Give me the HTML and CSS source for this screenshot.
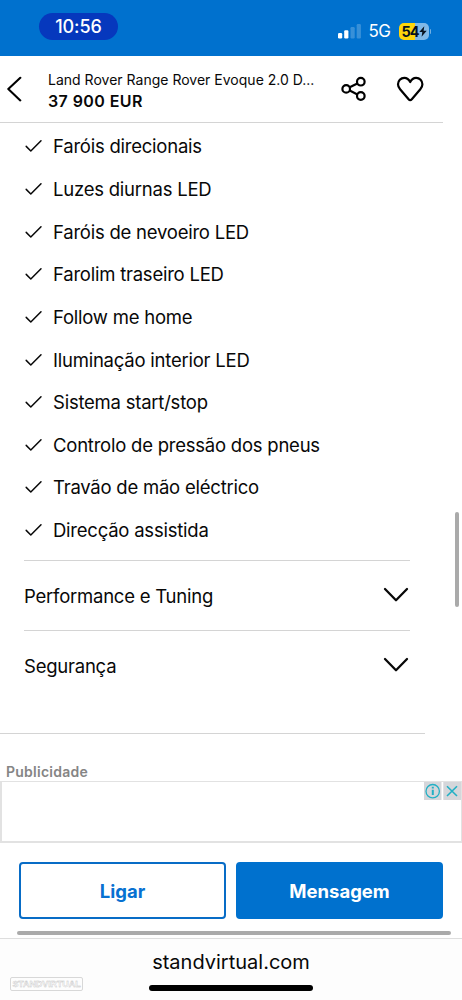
FILE: index.html
```html
<!DOCTYPE html>
<html lang="pt">
<head>
<meta charset="utf-8">
<meta name="viewport" content="width=device-width, initial-scale=1">
<title>Land Rover Range Rover Evoque - Standvirtual</title>
<link rel="stylesheet" href="styles.css">
</head>
<body>
<svg class="defs" width="0" height="0" aria-hidden="true">
  <symbol id="check" viewBox="0 0 18 14"><path d="M1.2 7.4 5.8 12 16 1.7" fill="none" stroke="currentColor" stroke-width="1.5" stroke-linecap="round" stroke-linejoin="round"/></symbol>
  <symbol id="chevron" viewBox="0 0 26 16"><path d="M2 2 13 13.2 24 2" fill="none" stroke="currentColor" stroke-width="2.3" stroke-linecap="round" stroke-linejoin="round"/></symbol>
</svg>
<div class="screen">
  <div class="status">
    <span class="time"><span>10:56</span></span>
    <div class="indicators">
      <svg class="signal" width="24" height="16" viewBox="0 0 24 16"><g fill="#fff"><rect x="0" y="10" width="4.2" height="5.4" rx="1.2"/><rect x="6.2" y="7.3" width="4.2" height="8.1" rx="1.2"/><g opacity=".22"><rect x="12.5" y="4" width="4.2" height="11.4" rx="1.2"/><rect x="18.7" y="1" width="4.2" height="14.4" rx="1.2"/></g></g></svg>
      <span class="network">5G</span>
      <div class="battery"><span class="level">54</span><svg width="8" height="11" viewBox="0 0 8 11"><path d="M5.3.2.3 6h3L2.6 10.8 7.7 4.8H4.6Z" fill="#08131f"/></svg></div>
      <i class="battery-tip"></i>
    </div>
  </div>

  <header class="header">
    <svg class="back" width="15" height="26" viewBox="0 0 15 26"><path d="M13.3 1.8 1.3 13.1 13.3 24.4" fill="none" stroke="#000" stroke-width="2.1" stroke-linecap="round" stroke-linejoin="round"/></svg>
    <div class="ad-title"><span class="model">Land Rover Range Rover Evoque 2.0 D...</span><strong class="price">37 900 EUR</strong></div>
    <svg class="share" width="26" height="26" viewBox="0 0 26 26" fill="none" stroke="#000" stroke-width="2.2"><circle cx="5.2" cy="12.9" r="3.8"/><circle cx="19.8" cy="5.7" r="3.8"/><circle cx="19.8" cy="20" r="3.8"/><path d="m8.7 11.2 7.7-3.8M8.7 14.6l7.7 3.8"/></svg>
    <svg class="heart" width="28" height="26" viewBox="0 0 28 26"><path d="M14.2 6.1C12.9 3.3 10.9 1.8 8.3 1.8 4.7 1.8 2 4.6 2 8.3c0 2 .7 3.5 2.1 5l8.5 9.9c1 1.1 2.2 1.1 3.2 0l8.5-9.9c1.4-1.5 2.1-3 2.1-5 0-3.7-2.7-6.5-6.3-6.5-2.6 0-4.6 1.5-5.9 4.3Z" fill="none" stroke="#000" stroke-width="2.2" stroke-linejoin="round"/></svg>
  </header>

  <main>
    <ul class="features">
      <li><svg><use href="#check"/></svg><span>Faróis direcionais</span></li>
      <li><svg><use href="#check"/></svg><span>Luzes diurnas LED</span></li>
      <li><svg><use href="#check"/></svg><span>Faróis de nevoeiro LED</span></li>
      <li><svg><use href="#check"/></svg><span>Farolim traseiro LED</span></li>
      <li><svg><use href="#check"/></svg><span>Follow me home</span></li>
      <li><svg><use href="#check"/></svg><span>Iluminação interior LED</span></li>
      <li><svg><use href="#check"/></svg><span>Sistema start/stop</span></li>
      <li><svg><use href="#check"/></svg><span>Controlo de pressão dos pneus</span></li>
      <li><svg><use href="#check"/></svg><span>Travão de mão eléctrico</span></li>
      <li><svg><use href="#check"/></svg><span>Direcção assistida</span></li>
    </ul>
    <section class="sections">
      <div class="section-row"><span>Performance e Tuning</span><svg><use href="#chevron"/></svg></div>
      <div class="section-row"><span>Segurança</span><svg><use href="#chevron"/></svg></div>
    </section>
    <div class="divider"></div>
    <div class="ad-label">Publicidade</div>
    <div class="ad-slot">
      <svg width="37" height="18" viewBox="0 0 37 18"><path d="M0 0h17.5v18H0zM19.3 0H37v18H19.3z" fill="#d5d6da"/><g fill="none" stroke="#22b0c5" stroke-width="1.6"><circle cx="8.7" cy="9.2" r="6.7" stroke-width="1.3"/><path d="M8.8 7.8v5.3M8.8 4.8v1.6" stroke-width="2"/><path d="m23 4.2 10 9.8M33 4.2 23 14"/></g></svg>
    </div>
  </main>

  <div class="actions"><button class="call">Ligar</button><button class="message">Mensagem</button></div>
  <div class="scroll-x"></div>
  <footer class="browser-bar">
    <span class="watermark">STANDVIRTUAL</span>
    <div class="address"><span>standvirtual.com</span><i class="home-indicator"></i></div>
  </footer>
  <div class="scroll-y"></div>
</div>
</body>
</html>
```
FILE: styles.css
```css
* { box-sizing: border-box; }
body { margin: 0; background: #fff; color: #080808; font-family: Inter, "Liberation Sans", sans-serif; }
.defs { position: absolute; }
svg { display: block; flex: none; }
.screen { position: relative; display: flex; flex-direction: column; width: 462px; height: 1000px; overflow: hidden; }
.status { display: flex; justify-content: space-between; align-items: flex-start; height: 55.5px; padding: 13px 31px 0 39px; background: #0071ce; color: #fff; }
.time { display: flex; align-items: center; justify-content: center; width: 79px; height: 27px; border-radius: 14px; background: #0638bd; font-size: 18px; font-weight: 500; letter-spacing: -.1px; }
.indicators { display: flex; align-items: center; height: 36px; }
.network { width: 23px; margin-left: 7px; font-size: 17px; letter-spacing: -.6px; }
.battery { display: flex; align-items: center; width: 30px; height: 17px; margin-left: 7px; padding-left: 3px; border-radius: 5px; background: linear-gradient(90deg, #ffd60a 54%, #81b9e7 54%); color: #08131f; }
.level { width: 17px; font-size: 14.5px; font-weight: 700; letter-spacing: -.9px; }
.battery-tip { width: 1.5px; height: 5px; margin-left: 1px; border-radius: 0 2px 2px 0; background: #72b0e3; }
.header { display: flex; height: 67.5px; width: 443px; padding-left: 7px; border-bottom: 1px solid #d4d4d4; }
.back { margin-top: 20px; }
.ad-title { display: flex; flex-direction: column; width: 284px; padding-top: 13px; margin-left: 26px; white-space: nowrap; }
.model { font-size: 14px; line-height: 21px; letter-spacing: .01px; }
.price { font-size: 16px; line-height: 22px; font-weight: 600; letter-spacing: .42px; }
.share { margin: 20.5px 0 0 9px; }
.heart { margin: 20px 0 0 29px; }
.features { margin: 0; padding: 2px 0 0 25px; list-style: none; }
.features li { display: flex; align-items: center; gap: 10px; height: 42.65px; font-size: 18.5px; letter-spacing: -.23px; white-space: nowrap; }
.features svg { width: 18px; height: 14px; }
.sections { width: 386px; margin: 8.5px 0 0 24px; }
.section-row { display: flex; justify-content: space-between; align-items: center; height: 70px; padding: 2px 1px 0 0; border-top: 1px solid #d4d4d4; font-size: 18.5px; letter-spacing: -.23px; }
.section-row svg { width: 26px; height: 16px; margin-top: -3px; }
.divider { width: 425px; height: 1px; margin-top: 33px; background: #d4d4d4; }
.ad-label { height: 47px; padding: 29px 0 0 6px; color: #858585; font-size: 14px; line-height: 18px; font-weight: 600; letter-spacing: .25px; }
.ad-slot { display: flex; justify-content: flex-end; height: 62px; border: 1px solid #e2e2e2; border-left-width: 2px; border-bottom-width: 2px; }
.actions { display: flex; gap: 10px; padding: 19px 19px 0; }
button { width: 207px; height: 57px; padding: 2px 0 0; border: 2px solid #0071ce; border-radius: 4px; font: 700 18.5px Inter, sans-serif; }
.call { background: #fff; color: #0871d1; border-color: #086cc6; }
.message { background: #0071ce; color: #fff; }
.scroll-x { width: 434px; height: 4px; margin: 12px 0 0 17px; border-radius: 2px; background: #aaa; }
.browser-bar { position: relative; height: 62px; margin-top: 3px; border-top: 1px solid #dedede; background: #fdfdfd; }
.address { display: flex; flex-direction: column; align-items: center; padding-top: 8px; font-size: 20px; line-height: 30px; }
.home-indicator { width: 164px; height: 6px; margin-top: 8px; border-radius: 3px; background: #000; }
.watermark { position: absolute; left: 10px; bottom: 9px; width: 73px; height: 14px; border: 1px solid #d8d8d8; border-radius: 2px; color: #fff; font: 700 9px/12px "Liberation Sans", sans-serif; text-align: center; letter-spacing: -.1px; -webkit-text-stroke: .4px #c4c4c4; }
.scroll-y { position: absolute; top: 512px; right: 3px; width: 4px; height: 95px; border-radius: 2px; background: #aaa; }
```
